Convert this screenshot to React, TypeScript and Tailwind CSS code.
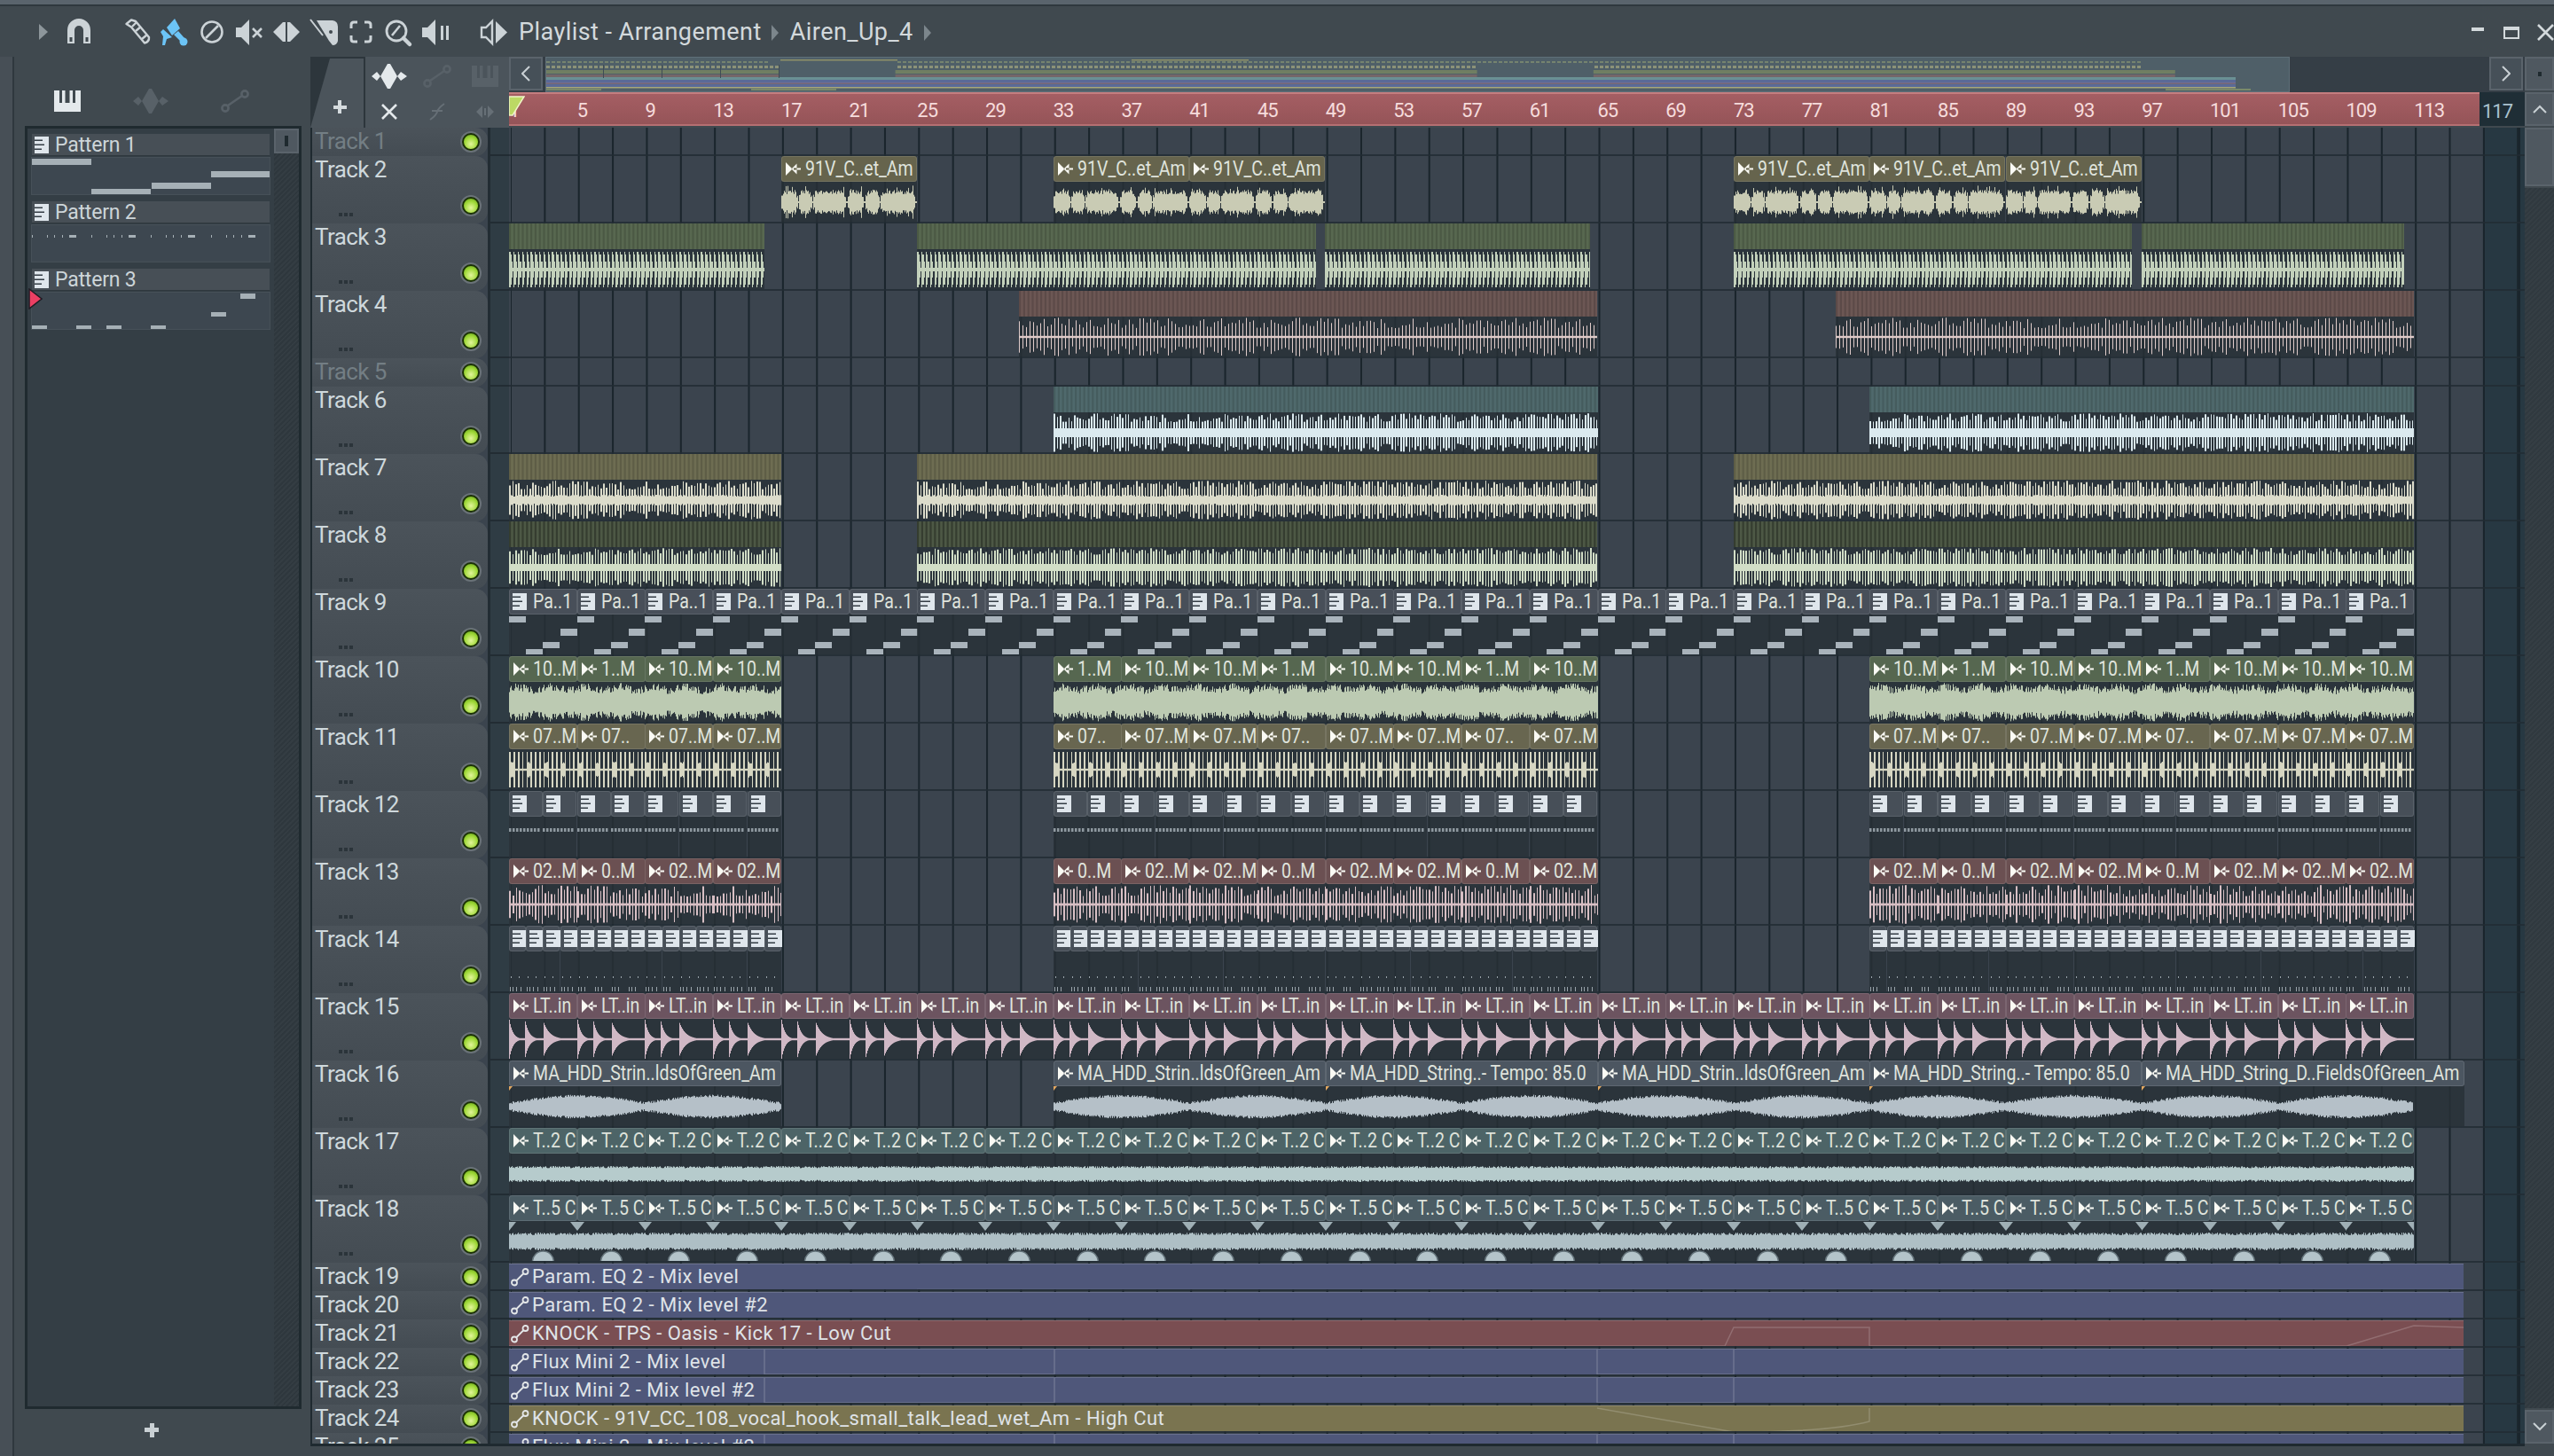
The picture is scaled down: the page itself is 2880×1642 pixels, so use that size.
import React from "react";

const BAR = 19.18;
const barX = (bar: number) => (bar - 1) * BAR;

const hash = (n: number) => {
  const s = Math.sin(n * 127.1 + 3.7) * 43758.5453;
  return s - Math.floor(s);
};

// ── waveform shapes: amplitude for a column t (px from clip start) ──
type WaveFn = (t: number, seed: number) => number;

const vocalSegs = [[0, 18], [20, 34], [36, 72], [75, 92], [95, 110], [112, 150]];

const waves: Record<string, WaveFn> = {
  vocal: (t, s) => {
    const seg = vocalSegs.find((g) => t >= g[0] && t <= g[1]);
    if (!seg) return 1;
    const edge = Math.min(t - seg[0], seg[1] - t);
    const body = 9 + hash(t + s) * 5 + (hash(t * 3 + s) > 0.9 ? 5 : 0);
    return edge < 2 ? body * 0.6 : body;
  },
  stab: (t) => {
    const p = (t % 4.8) / 4.8;
    return p < 0.22 ? 20 : p < 0.5 ? 17 : p < 0.75 ? 9 : 2;
  },
  pink: (t, s) => {
    const p = (t % 4) / 4;
    return p < 0.25 ? 10 + hash(Math.floor(t / 4) + s) * 12 : 1.2;
  },
  dense: (t, s) => {
    const p = (t % 3.2) / 3.2;
    return p < 0.5 ? 12 + hash(Math.floor(t / 3.2) + s) * 10 : 5;
  },
  yellow: (t, s) => {
    const p = (t % 3.2) / 3.2;
    return p < 0.5 ? 12 + hash(Math.floor(t / 3.2) + s) * 10 : 4 + hash(t) * 2;
  },
  greenSpike: (t, s) => {
    const p = (t % 3.2) / 3.2;
    return p < 0.5 ? 14 + hash(Math.floor(t / 3.2) + s) * 8 : 4;
  },
  noise: (t, s) => 11 + hash(t + s) * 9 + 2 * Math.sin(t / 6),
  spiky: (t, s) => {
    const p = (t % 4.8) / 4.8;
    if (p < 0.3) return 20;
    const lump = (t % 19.18) / 19.18;
    return lump < 0.25 ? 7 + hash(t + s) * 2 : 1.2;
  },
  redSpike: (t, s) => {
    const p = (t % 3.6) / 3.6;
    return p < 0.4 ? 9 + hash(Math.floor(t / 3.6) + s) * 13 : 1.4;
  },
  kick: (t) => {
    const hit = (at: number, len: number, amp: number) =>
      t >= at ? amp * Math.exp(-(t - at) / len) : 0;
    return Math.max(1.2, hit(0, 4, 22), hit(17.4, 4.5, 23), hit(38.4, 7, 20));
  },
  strings: (t, s) => 2.5 + 8 * Math.abs(Math.sin((Math.PI * t) / 153)) + hash(t + s) * 3,
  pad: (t, s) => 6.5 + hash(t + s) * 2.5,
  pad2: (t, s) => 7 + hash(t + s) * 3,
};

const wavePath = (kind: string, w: number, seed: number, cy: number) => {
  let d = "";
  const fn = waves[kind];
  for (let x = 0; x < w; x++) {
    const a = fn(x, seed);
    d += `M${x + 0.5} ${(cy - a).toFixed(1)}V${(cy + a).toFixed(1)}`;
  }
  return d;
};

// ── little icons used inside clips ──
const AudioGlyph = ({ color = "#fafaf4" }: { color?: string }) => (
  <svg width="18" height="15" viewBox="0 0 18 15" className="shrink-0">
    <path d="M1 0L8.5 7.5L1 15ZM13.5 1.5L7.5 7.5L13.5 13.5ZM10 6.5H18V8.5H10Z" fill={color} />
  </svg>
);

const PatternGlyph = () => (
  <svg width="16" height="19" viewBox="0 0 16 19" className="shrink-0">
    <rect width="16" height="19" fill="#dfe6ec" />
    <path d="M0 3.5H9V5H0ZM0 8.5H11V10H0ZM0 13.5H8V15H0Z" fill="#343d45" />
  </svg>
);

const AutoGlyph = () => (
  <svg width="21" height="21" viewBox="0 0 21 21" className="shrink-0">
    <circle cx="4" cy="16.5" r="3" fill="none" stroke="#e4e7e9" strokeWidth="1.8" />
    <circle cx="16.5" cy="4" r="3" fill="none" stroke="#e4e7e9" strokeWidth="1.8" />
    <path d="M6.5 14L14 6.5" stroke="#e4e7e9" strokeWidth="1.8" />
  </svg>
);

// ── track data ──
type Clip = { start: number; end: number; label?: string };
type Track = {
  n: number;
  h: number;
  dim?: boolean;
  type: "empty" | "band" | "title" | "auto";
  color?: string;
  waveColor?: string;
  wave?: string;
  stripe?: number;
  glyph?: "audio" | "pattern";
  extra?: "notes" | "dash" | "ticks" | "marks" | "orange";
  clips?: Clip[];
  line?: string;
  label?: string;
};

const run = (start: number, end: number, step: number, labels: string[] | string): Clip[] => {
  const out: Clip[] = [];
  let i = 0;
  for (let b = start; b < end; b += step) {
    out.push({ start: b, end: b + step, label: typeof labels === "string" ? labels : labels[i] });
    i++;
  }
  return out;
};

const tracks: Track[] = [
  { n: 1, h: 32, dim: true, type: "empty" },
  {
    n: 2, h: 76, type: "title", color: "#66644d", waveColor: "#c9cbb4", wave: "vocal", glyph: "audio",
    clips: [...run(17, 25, 8, "91V_C..et_Am"), ...run(33, 49, 8, "91V_C..et_Am"), ...run(73, 97, 8, "91V_C..et_Am")],
  },
  {
    n: 3, h: 76, type: "band", color: "#586850", waveColor: "#c3d1bb", wave: "stab", stripe: 0.14,
    clips: [{ start: 1, end: 16 }, { start: 25, end: 48.45 }, { start: 48.95, end: 64.55 }, { start: 73, end: 96.4 }, { start: 97, end: 112.45 }],
  },
  {
    n: 4, h: 76, type: "band", color: "#6c5754", waveColor: "#dfcbc9", wave: "pink", stripe: 0.14,
    clips: [{ start: 31, end: 65 }, { start: 79, end: 113 }],
  },
  { n: 5, h: 32, dim: true, type: "empty" },
  {
    n: 6, h: 76, type: "band", color: "#4f696c", waveColor: "#dbeaef", wave: "dense", stripe: 0.12,
    clips: [{ start: 33, end: 65 }, { start: 81, end: 113 }],
  },
  {
    n: 7, h: 76, type: "band", color: "#6e6d52", waveColor: "#dcdccb", wave: "yellow", stripe: 0.14,
    clips: [{ start: 1, end: 17 }, { start: 25, end: 65 }, { start: 73, end: 113 }],
  },
  {
    n: 8, h: 76, type: "band", color: "#4d5845", waveColor: "#d2dec7", wave: "greenSpike", stripe: 0.3,
    clips: [{ start: 1, end: 17 }, { start: 25, end: 65 }, { start: 73, end: 113 }],
  },
  {
    n: 9, h: 76, type: "title", color: "#484f59", glyph: "pattern", extra: "notes",
    clips: run(1, 113, 4, "Pa..1"),
  },
  {
    n: 10, h: 76, type: "title", color: "#566750", waveColor: "#bccab2", wave: "noise", glyph: "audio",
    clips: [
      ...run(1, 17, 4, ["10..M", "1..M", "10..M", "10..M"]),
      ...run(33, 65, 4, ["1..M", "10..M", "10..M", "1..M", "10..M", "10..M", "1..M", "10..M"]),
      ...run(81, 113, 4, ["10..M", "1..M", "10..M", "10..M", "1..M", "10..M", "10..M", "10..M"]),
    ],
  },
  {
    n: 11, h: 76, type: "title", color: "#686650", waveColor: "#d6d6c2", wave: "spiky", glyph: "audio",
    clips: [
      ...run(1, 17, 4, ["07..M", "07..", "07..M", "07..M"]),
      ...run(33, 65, 4, ["07..", "07..M", "07..M", "07..", "07..M", "07..M", "07..", "07..M"]),
      ...run(81, 113, 4, ["07..M", "07..", "07..M", "07..M", "07..", "07..M", "07..M", "07..M"]),
    ],
  },
  {
    n: 12, h: 76, type: "title", color: "#474f58", glyph: "pattern", extra: "dash",
    clips: [...run(1, 17, 2, ""), ...run(33, 65, 2, ""), ...run(81, 113, 2, "")],
  },
  {
    n: 13, h: 76, type: "title", color: "#6b5052", waveColor: "#d8bfc4", wave: "redSpike", glyph: "audio",
    clips: [
      ...run(1, 17, 4, ["02..M", "0..M", "02..M", "02..M"]),
      ...run(33, 65, 4, ["0..M", "02..M", "02..M", "0..M", "02..M", "02..M", "0..M", "02..M"]),
      ...run(81, 113, 4, ["02..M", "0..M", "02..M", "02..M", "0..M", "02..M", "02..M", "02..M"]),
    ],
  },
  {
    n: 14, h: 76, type: "title", color: "#474f58", glyph: "pattern", extra: "ticks",
    clips: [...run(1, 17, 1, ""), ...run(33, 65, 1, ""), ...run(81, 113, 1, "")],
  },
  {
    n: 15, h: 76, type: "title", color: "#6c5460", waveColor: "#d0b8c5", wave: "kick", glyph: "audio",
    clips: run(1, 113, 4, "LT..in"),
  },
  {
    n: 16, h: 76, type: "title", color: "#4c5661", waveColor: "#b5c0c8", wave: "strings", glyph: "audio", extra: "orange",
    clips: [
      { start: 1, end: 17, label: "MA_HDD_Strin..ldsOfGreen_Am" },
      { start: 33, end: 49, label: "MA_HDD_Strin..ldsOfGreen_Am" },
      { start: 49, end: 65, label: "MA_HDD_String..- Tempo: 85.0" },
      { start: 65, end: 81, label: "MA_HDD_Strin..ldsOfGreen_Am" },
      { start: 81, end: 97, label: "MA_HDD_String..- Tempo: 85.0" },
      { start: 97, end: 116, label: "MA_HDD_String_D..FieldsOfGreen_Am" },
    ],
  },
  {
    n: 17, h: 76, type: "title", color: "#4d6467", waveColor: "#b6cbcc", wave: "pad", glyph: "audio",
    clips: run(1, 113, 4, "T..2 C"),
  },
  {
    n: 18, h: 76, type: "title", color: "#4b5c64", waveColor: "#aebfc5", wave: "pad2", glyph: "audio", extra: "marks",
    clips: run(1, 113, 4, "T..5 C"),
  },
  { n: 19, h: 32, type: "auto", color: "#4f577a", label: "Param. EQ 2 - Mix level", line: "M460 28.5H2204" },
  { n: 20, h: 32, type: "auto", color: "#4f577a", label: "Param. EQ 2 - Mix level #2" },
  { n: 21, h: 32, type: "auto", color: "#7a4e52", label: "KNOCK - TPS - Oasis - Kick 17 - Low Cut", line: "M0 28H1371L1381 7H1534V28H2072L2148 5L2204 7" },
  { n: 22, h: 32, type: "auto", color: "#4f577a", label: "Flux Mini 2 - Mix level", line: "M288 0V28H615V0M1227 0V28H1381V0" },
  { n: 23, h: 32, type: "auto", color: "#4f577a", label: "Flux Mini 2 - Mix level #2", line: "M288 0V28H615V0M1227 0V28H1381V0" },
  { n: 24, h: 32, type: "auto", color: "#7a7450", label: "KNOCK - 91V_CC_108_vocal_hook_small_talk_lead_wet_Am - High Cut", line: "M1227 2L1381 29Q1490 29 1534 17V2" },
  { n: 25, h: 32, type: "auto", color: "#4f577a", label: "Flux Mini 2 - Mix level #2", line: "M288 0V28H615V0M1227 0V28H1381V0" },
];

// ── clip pieces ──
const BandClip = ({ clip, track }: { clip: Clip; track: Track }) => {
  const w = Math.round((clip.end - clip.start) * BAR);
  const stripes: number[] = [];
  for (let x = 0; x < w; x += 4.8) stripes.push(x);
  return (
    <svg
      className="absolute top-0 bg-[#283137]/80"
      width={w}
      height={74}
      style={{ left: barX(clip.start) }}
    >
      <rect width={w} height="29" fill={track.color} />
      {stripes.map((x) => (
        <rect key={x} x={x} width="2.2" height="29" fill="#000" opacity={track.stripe} />
      ))}
      <path d={wavePath(track.wave!, w, track.n * 31 + clip.start, 52)} stroke={track.waveColor} strokeWidth="1" />
    </svg>
  );
};

const ClipBody = ({ clip, track, w }: { clip: Clip; track: Track; w: number }) => {
  const seed = track.n * 17 + clip.start * 3;
  if (track.extra === "notes") {
    return (
      <svg width={w} height={45} fill="#a9b3bb">
        <rect x="0" y="2" width="19" height="7" />
        <rect x="19" y="39" width="19" height="6" />
        <rect x="38" y="31" width="19" height="7" />
        <rect x="58" y="16" width="19" height="8" />
      </svg>
    );
  }
  if (track.extra === "dash") {
    const dashes = Array.from({ length: Math.floor(w / 4) }, (_, i) => i * 4);
    return (
      <svg width={w} height={45} fill="#8e989f">
        {dashes.map((x) => (
          <rect key={x} x={x} y="13" width="2.5" height="4" />
        ))}
      </svg>
    );
  }
  if (track.extra === "ticks") {
    return (
      <svg width={w} height={45} fill="#9aa4ab">
        <rect x="2" y="28" width="1" height="2" />
        <rect x="11" y="28" width="1" height="2" />
        <rect x="1" y="40" width="1" height="5" />
        <rect x="4" y="40" width="1" height="5" />
        <rect x="8" y="40" width="1" height="5" />
        {hash(clip.start) > 0.4 && <rect x="13" y="40" width="1" height="5" />}
      </svg>
    );
  }
  return (
    <svg width={w} height={45} className="overflow-hidden">
      <path d={wavePath(track.wave!, Math.min(w, track.n === 16 && clip.end > 113 ? 306 : w), seed, 23)} stroke={track.waveColor} strokeWidth="1" />
      {track.extra === "marks" && (
        <>
          <path d="M0 11L-8 1H8Z" fill="#9fafb5" />
          <path d={`M${w} 11L${w - 8} 1H${w + 8}Z`} fill="#9fafb5" />
          <circle cx="38.4" cy="46" r="12" fill="#b4c4ca" stroke="#66757c" strokeWidth="1.5" />
        </>
      )}
      {track.extra === "orange" && <path d="M0 0H4L0 5Z" fill="#e4a860" />}
    </svg>
  );
};

const TitleClip = ({ clip, track }: { clip: Clip; track: Track }) => {
  const w = Math.round((clip.end - clip.start) * BAR);
  return (
    <div
      className="absolute top-0 flex h-[74px] flex-col bg-[#283137]/80"
      style={{ left: barX(clip.start), width: w }}
    >
      <div
        className="flex h-[29px] shrink-0 items-center gap-[5px] whitespace-nowrap rounded-[3px] border border-white/10 pl-[3px] text-[23px] leading-none text-[#dfe3dc]"
        style={{ backgroundColor: track.color }}
      >
        {track.glyph === "audio" ? <AudioGlyph /> : <PatternGlyph />}
        {clip.label && (
          <span className={`inline-block origin-left scale-x-[0.85] ${track.glyph === "pattern" ? "ml-[2px]" : ""}`}>
            {clip.label}
          </span>
        )}
      </div>
      <ClipBody clip={clip} track={track} w={w} />
    </div>
  );
};

const AutoClip = ({ track }: { track: Track }) => (
  <div
    className="absolute inset-x-0 top-[1px] mr-[69px] flex h-[29px] items-center gap-[3px] overflow-hidden border-t border-white/15 pl-[2px] text-[22px] leading-none tracking-[0.45px] text-[#dfe3e8]"
    style={{ backgroundColor: track.color }}
  >
    {track.line && (
      <svg className="absolute left-0 top-0" width="2204" height="30" fill="none">
        <path d={track.line} stroke="#fff" strokeOpacity="0.18" strokeWidth="1.5" />
      </svg>
    )}
    <AutoGlyph />
    <span className="relative">{track.label}</span>
  </div>
);

const TrackHead = ({ track }: { track: Track }) => {
  const tall = track.h > 40;
  return (
    <div
      className={`flex w-[198px] shrink-0 justify-between rounded-r-[14px] bg-[linear-gradient(#4b535a,#444c53)] pl-[3px] pr-[7px] ${
        tall ? "" : "items-center"
      }`}
    >
      <div className="flex flex-col justify-between">
        <span
          className={`text-[26px] leading-[30px] tracking-[-0.6px] ${tall ? "" : "mt-[-2px]"} ${
            track.dim ? "text-[#737e84]" : "text-[#ced8dc]"
          }`}
        >
          Track {track.n}
        </span>
        {tall && (
          <div className="mb-[8px] ml-[27px] flex gap-[2px]">
            <i className="h-[4px] w-[4px] bg-[#2b343a]" />
            <i className="h-[4px] w-[4px] bg-[#2b343a]" />
            <i className="h-[4px] w-[4px] bg-[#2b343a]" />
          </div>
        )}
      </div>
      <span
        className={`flex h-[24px] w-[24px] shrink-0 items-center justify-center rounded-full bg-[#6a7278] ${
          tall ? "mt-[44px]" : ""
        }`}
      >
        <i className="h-[20px] w-[20px] rounded-full border-2 border-[#1b3106] bg-[radial-gradient(circle_at_50%_65%,#e2f59a,#9fd838_55%,#5f9c14)]" />
      </span>
    </div>
  );
};

const TrackRow = ({ track }: { track: Track }) => (
  <div className="flex shrink-0" style={{ height: track.h }}>
    <TrackHead track={track} />
    <div className="w-[24px] shrink-0 border-b-2 border-l-[3px] border-[#222c33] bg-[#2f3c44]" />
    <div className="relative flex-1 border-b-2 border-[#222c33]/80">
      {track.type === "band" && track.clips!.map((c) => <BandClip key={c.start} clip={c} track={track} />)}
      {track.type === "title" && track.clips!.map((c) => <TitleClip key={c.start} clip={c} track={track} />)}
      {track.type === "auto" && <AutoClip track={track} />}
    </div>
  </div>
);

// grid behind the lanes
const gridLines = Array.from({ length: 60 }, (_, i) => i * 2 * BAR);

const Grid = () => (
  <svg className="absolute left-[224px] top-0" width="2273" height="1484">
    <rect x="2225" width="48" height="1484" fill="#273842" />
    {gridLines.map((x) => (
      <rect key={x} x={x - 1} width="2" height="1484" fill="#1a252c" />
    ))}
    <rect x="2264" width="2" height="1484" fill="#1a252c" />
  </svg>
);

// ── overview strip ──
const ovX = (bar: number) => (bar - 1) * 16.4;

const Overview = () => {
  const hatch = Array.from({ length: 300 }, (_, i) => i * 6);
  const spans = [
    [1, 17],
    [25, 65],
    [73, 113],
  ];
  return (
    <svg width="1965" height="38" className="shrink-0 bg-[#4f5f68]">
      <rect x="264" y="2" width="132" height="1.5" fill="#8f9168" />
      <rect x="660" y="2" width="132" height="1.5" fill="#8f9168" />
      {hatch.map((x) => {
        const off = x > 248 && x < 396;
        const past = x > 1856;
        return off || past ? null : <rect key={x} x={x} y="4" width="4" height="2" fill="#75836f" />;
      })}
      {hatch.map((x) => {
        const on = spans.some((s) => x >= ovX(s[0]) && x < ovX(s[1])) && x < 1856;
        return on ? <rect key={x} x={x} y="9" width="4" height="3" fill="#8b9278" /> : null;
      })}
      {spans.map((s) => (
        <g key={s[0]}>
          <rect x={ovX(s[0])} y="14" width={ovX(s[1]) - ovX(s[0])} height="4" fill="#707e62" />
          <rect x={ovX(s[0])} y="19" width={ovX(s[1]) - ovX(s[0])} height="3" fill="#756668" />
        </g>
      ))}
      <rect y="22" width="1905" height="3" fill="#6a9093" />
      <rect y="25" width="1905" height="4" fill="#5a6a98" />
      <rect y="28.5" width="1905" height="1" fill="#96707e" />
      <rect y="30" width="1905" height="3" fill="#5a6a98" />
      <rect y="33" width="1905" height="1.5" fill="#a8a87a" />
      <rect x="0" y="35" width="62" height="2" fill="#7a8a6a" />
      <rect x="231" y="35" width="96" height="2" fill="#7a8a6a" />
      <rect x="1826" y="35" width="96" height="2" fill="#7a8a6a" />
      {[64, 130, 196, 262].map((x) => (
        <rect key={x} x={x} y="8" width="1" height="15" fill="#3f4c55" />
      ))}
    </svg>
  );
};

// ── toolbar icons ──
const ic = "#ccd3d7";

const toolIcons: { w: number; ml: number; node: React.ReactNode }[] = [
  { w: 10, ml: 44, node: <path d="M0 6L10 15L0 24Z" fill="#8d969b" /> },
  {
    w: 28, ml: 21,
    node: (
      <>
        <path d="M1 28V13A13 13 0 0 1 27 13V28H19V13A5 5 0 0 0 9 13V28Z" fill={ic} />
        <path d="M3.5 21H6.5V26H3.5ZM21.5 21H24.5V26H21.5Z" fill="#40494f" />
      </>
    ),
  },
  {
    w: 29, ml: 38,
    node: (
      <g fill="none" stroke={ic} strokeWidth="2.4" strokeLinejoin="round">
        <path d="M1.5 6L7 1.5L12 3L27 21Q27.5 26 22 27.5L7 9.5Z" />
        <path d="M8 9L13 4M12 14L18 9M19 23L25 18" />
      </g>
    ),
  },
  {
    w: 31, ml: 11,
    node: (
      <g fill="#6cc4f6">
        <path d="M7 10L16 0L22 11L13 19Z" />
        <path d="M3 12L13 21L7 23L5 30L2 30L3 20L0 15Z" />
        <path d="M15 18L20 14L27 22L23 26Z" />
        <circle cx="26" cy="26" r="4.5" />
      </g>
    ),
  },
  {
    w: 26, ml: 14,
    node: (
      <g fill="none" stroke={ic} strokeWidth="2.6">
        <circle cx="13" cy="15" r="11.5" />
        <path d="M6 22L20 8" />
      </g>
    ),
  },
  {
    w: 31, ml: 14,
    node: (
      <>
        <path d="M0 10H6L15 1V30L6 21H0Z" fill={ic} />
        <path d="M19 11L29 21M29 11L19 21" stroke={ic} strokeWidth="2.6" fill="none" />
      </>
    ),
  },
  {
    w: 30, ml: 11,
    node: <path d="M0 15L11 4H14V26H11ZM30 15L19 4H16V26H19Z" fill={ic} />,
  },
  {
    w: 31, ml: 12,
    node: (
      <>
        <path d="M0 1L14 19" stroke={ic} strokeWidth="2" fill="none" />
        <path d="M7 2H25Q31 3 31 9V25Q30 30 25 30L21 25Z" fill={ic} />
        <circle cx="23" cy="15" r="2" fill="#40494f" />
      </>
    ),
  },
  {
    w: 26, ml: 13,
    node: (
      <path d="M9 4H5Q2 4 2 7V11M17 4H21Q24 4 24 7V11M2 19V23Q2 26 5 26H9M24 19V23Q24 26 21 26H17" fill="none" stroke={ic} strokeWidth="3" />
    ),
  },
  {
    w: 31, ml: 14,
    node: (
      <g fill="none" stroke={ic}>
        <circle cx="13" cy="14" r="11" strokeWidth="2.8" />
        <path d="M8 19L17 8" strokeWidth="2.6" />
        <path d="M21 22L28 29" strokeWidth="4.5" strokeLinecap="round" />
      </g>
    ),
  },
  {
    w: 30, ml: 11,
    node: (
      <>
        <path d="M0 10H6L15 1V30L6 21H0Z" fill={ic} />
        <path d="M21 8H24V24H21ZM27 8H30V24H27Z" fill={ic} />
      </>
    ),
  },
  {
    w: 31, ml: 35,
    node: (
      <>
        <path d="M14 3V28L7 21H2V10H7Z" fill="none" stroke={ic} strokeWidth="2.4" />
        <path d="M18 3L31 15.5L18 28Z" fill={ic} />
      </>
    ),
  },
];

const TitleArrow = () => (
  <svg width="8" height="18" viewBox="0 0 8 18" className="shrink-0">
    <path d="M0 0L8 9L0 18Z" fill="#7c868c" />
  </svg>
);

const TitleBar = () => (
  <div className="flex h-[57px] shrink-0 items-center pt-[2px]">
    {toolIcons.map((t, i) => (
      <svg key={i} width={t.w} height="31" viewBox={`0 0 ${t.w} 31`} className="shrink-0 overflow-visible" style={{ marginLeft: t.ml }}>
        {t.node}
      </svg>
    ))}
    <span className="ml-[13px] text-[27px] leading-none tracking-[0.45px] text-[#d3d9dc]">Playlist - Arrangement</span>
    <span className="ml-[11px]"><TitleArrow /></span>
    <span className="ml-[13px] text-[27px] leading-none tracking-[0.45px] text-[#d3d9dc]">Airen_Up_4</span>
    <span className="ml-[12px]"><TitleArrow /></span>
    <div className="ml-auto flex items-center">
      <i className="mb-[8px] h-[4px] w-[14px] bg-[#d3d9dc]" />
      <i className="ml-[22px] h-[14px] w-[18px] border-2 border-t-4 border-[#d3d9dc]" />
      <svg width="19" height="19" viewBox="0 0 19 19" className="ml-[20px] shrink-0">
        <path d="M1 1L18 18M18 1L1 18" stroke="#d3d9dc" strokeWidth="2.6" />
      </svg>
    </div>
  </div>
);

// ── picker ──
type Note = [number, number, number, number];

const patterns: { name: string; notes: Note[] }[] = [
  { name: "Pattern 1", notes: [[0, 1, 67, 7], [67, 35, 67, 7], [135, 28, 67, 7], [202, 15, 67, 7]] },
  {
    name: "Pattern 2",
    notes: [0, 67, 134, 202].flatMap((o): Note[] => [
      [o + 0, 11, 1, 3], [o + 17, 11, 1, 3], [o + 25, 11, 1, 3], [o + 34, 11, 1, 3], [o + 42, 11, 8, 3],
    ]),
  },
  {
    name: "Pattern 3",
    notes: [[0, 37, 17, 6], [50, 37, 17, 6], [84, 37, 17, 6], [134, 37, 17, 6], [202, 22, 17, 5], [235, 1, 17, 6]],
  },
];

const PickerIcon = ({ kind, faded }: { kind: string; faded?: boolean }) => {
  const c = faded ? "#586168" : "#e4e9ec";
  if (kind === "piano") {
    return (
      <svg width="30" height="24" viewBox="0 0 30 24" className="shrink-0">
        <path d="M0 0H6V14H9V0H12.5V14H17.5V0H21V14H24V0H30V24H0Z" fill={c} />
      </svg>
    );
  }
  if (kind === "wave") {
    return (
      <svg width="40" height="28" viewBox="0 0 40 28" className="shrink-0">
        <path d="M0 14L6 9L10 14L14 7L18 0H21L25 7L29 14L33 9L40 14L33 19L29 14L25 21L21 28H18L14 21L10 14L6 19Z" fill={c} />
      </svg>
    );
  }
  return (
    <svg width="32" height="26" viewBox="0 0 32 26" className="shrink-0" fill="none" stroke={c} strokeWidth="2.6">
      <circle cx="5" cy="21" r="3.6" />
      <circle cx="27" cy="5" r="3.6" />
      <path d="M8 18L24 7" />
    </svg>
  );
};

const Picker = () => (
  <div className="flex w-[334px] shrink-0 flex-col">
    <div className="flex h-[78px] shrink-0 items-center pl-[45px] pt-[22px]">
      <div className="flex items-center gap-[59px]">
        <PickerIcon kind="piano" />
        <PickerIcon kind="wave" faded />
        <PickerIcon kind="auto" faded />
      </div>
    </div>
    <div className="relative ml-[12px] flex h-[1447px] w-[312px] shrink-0 border-[3px] border-[#1f2a2f] bg-[#343e45]">
      <div className="flex flex-1 flex-col pl-[4px] pt-[6px]">
        {patterns.map((p) => (
          <div key={p.name} className="flex h-[76px] shrink-0 flex-col">
            <div className="ml-[1px] flex h-[25px] w-[268px] items-center gap-[7px] border-b border-[#2f383e] bg-[#474f56] pl-[3px] text-[23px] leading-none tracking-[-0.2px] text-[#cdd5d9]">
              <PatternGlyph />
              {p.name}
            </div>
            <svg width="270" height="43" className="mt-[1px] border border-[#465058] bg-[#3d4750]">
              {p.notes.map((n, i) => (
                <rect key={i} x={n[0]} y={n[1]} width={n[2]} height={n[3]} fill="#a6b0b6" />
              ))}
            </svg>
          </div>
        ))}
      </div>
      <div className="flex w-[28px] shrink-0 flex-col bg-[repeating-linear-gradient(135deg,#2e373d_0_2px,#343d43_2px_4px)]">
        <div className="flex h-[28px] shrink-0 items-center justify-center border-2 border-[#5a636b] bg-[#4f5860]">
          <i className="h-[12px] w-[4px] bg-[#1f2a2f]" />
        </div>
      </div>
      <svg className="absolute left-[1px] top-[180px]" width="16" height="24" viewBox="0 0 16 24">
        <path d="M1 1L15 12L1 23Z" fill="#ec3f63" stroke="#1f1c24" strokeWidth="1.5" />
      </svg>
    </div>
    <div className="flex flex-1 items-center justify-center pb-[6px] pr-[24px]">
      <span className="relative h-[16px] w-[16px]">
        <i className="absolute left-[5.5px] top-0 h-[16px] w-[5px] bg-[#c9d0d4]" />
        <i className="absolute left-0 top-[5.5px] h-[5px] w-[16px] bg-[#c9d0d4]" />
      </span>
    </div>
  </div>
);

// ── playlist header ──
const NavButton = ({ dir }: { dir: "left" | "right" }) => (
  <div className="flex h-[38px] w-[38px] shrink-0 items-center justify-center border-2 border-[#5a636b] bg-[#465058]">
    <svg width="10" height="18" viewBox="0 0 10 18" fill="none" stroke="#c9d0d4" strokeWidth="2">
      <path d={dir === "left" ? "M9 1L1 9L9 17" : "M1 1L9 9L1 17"} />
    </svg>
  </div>
);

const rulerLabels = Array.from({ length: 29 }, (_, i) => 1 + i * 4);

const Ruler = () => (
  <div className="flex h-[38px] shrink-0">
    <div className="relative flex w-[2222px] shrink-0 items-center overflow-hidden border-y-2 border-t-[#c47d7f] border-b-[#b56f72] bg-[linear-gradient(#a55e63,#955458)] pt-[3px] text-[22px] leading-none tracking-[-1px] text-[#f6dcdc]">
      {rulerLabels.map((n) => (
        <span key={n} className="w-[76.72px] shrink-0">
          {n}
        </span>
      ))}
      <svg className="absolute left-0 top-[2px]" width="18" height="24" viewBox="0 0 18 24">
        <path d="M0 1H17L4 22H0Z" fill="#bcd964" stroke="#f0f5c8" strokeWidth="1.5" />
      </svg>
    </div>
    <div className="flex flex-1 items-center bg-[#1f2e36] pl-[3px] pt-[6px] text-[22px] leading-none tracking-[-1px] text-[#a9c2ce]">
      117
    </div>
  </div>
);

const ToolTabs = () => (
  <div className="flex h-[80px] w-[224px] shrink-0 gap-[2px] bg-[#2d363c]">
    <div className="flex w-[60px] shrink-0 items-end justify-center bg-[#4b545b] pb-[16px] pl-[6px] [clip-path:polygon(22px_2px,100%_2px,100%_100%,0_100%)]">
      <span className="relative h-[15px] w-[15px]">
        <i className="absolute left-[5.5px] top-0 h-[15px] w-[4px] bg-[#d5dbde]" />
        <i className="absolute left-0 top-[5.5px] h-[4px] w-[15px] bg-[#d5dbde]" />
      </span>
    </div>
    <div className="grid flex-1 grid-cols-3 place-items-center bg-[#4b545b]">
      <PickerIcon kind="wave" />
      <PickerIcon kind="auto" faded />
      <PickerIcon kind="piano" faded />
      <svg width="20" height="18" viewBox="0 0 20 18" fill="none" stroke="#e4e9ec" strokeWidth="2.6">
        <path d="M2 1L18 17M18 1L2 17" />
      </svg>
      <svg width="20" height="20" viewBox="0 0 20 20" fill="none" stroke="#666f76" strokeWidth="2">
        <path d="M2 19Q9 14 10 10T18 1M4 9H16" />
      </svg>
      <svg width="20" height="16" viewBox="0 0 20 16" fill="#666f76">
        <path d="M0 8L7 1V15ZM20 8L13 1V15ZM9 4H11V12H9Z" />
      </svg>
    </div>
  </div>
);

const Playlist = () => (
  <div className="flex min-w-0 flex-1">
    <div className="flex w-[2497px] shrink-0 flex-col">
      <div className="flex h-[80px] shrink-0">
        <ToolTabs />
        <div className="flex flex-1 flex-col">
          <div className="flex h-[40px] shrink-0 items-start bg-[#353e46]">
            <NavButton dir="left" />
            <div className="ml-[3px] border border-[#5f6f78]">
              <Overview />
            </div>
            <div className="ml-auto pr-[2px]">
              <NavButton dir="right" />
            </div>
          </div>
          <Ruler />
        </div>
      </div>
      <div className="relative h-[1484px] shrink-0 overflow-hidden border-l-2 border-[#1f2a30] bg-[#3b444e]">
        <Grid />
        <div className="relative flex flex-col">
          {tracks.map((t) => (
            <TrackRow key={t.n} track={t} />
          ))}
        </div>
      </div>
      <div className="h-[3px] shrink-0 bg-[#1f2a30]" />
    </div>
    <div className="flex h-[1564px] w-[33px] shrink-0 flex-col gap-[2px]">
      <div className="flex h-[38px] shrink-0 items-center justify-center border-2 border-[#5a636b] bg-[#4f5860]">
        <i className="h-[5px] w-[4px] bg-[#1f2a2f]" />
      </div>
      <div className="flex h-[38px] shrink-0 items-center justify-center border-2 border-[#5a636b] bg-[#4f5860]">
        <svg width="16" height="10" viewBox="0 0 16 10" fill="none" stroke="#c9d0d4" strokeWidth="2">
          <path d="M1 9L8 2L15 9" />
        </svg>
      </div>
      <div className="h-[66px] shrink-0 border-2 border-[#5a636b] bg-[#4f5860]" />
      <div className="flex-1 bg-[repeating-linear-gradient(135deg,#30393f_0_2px,#353e44_2px_4px)]" />
      <div className="flex h-[38px] shrink-0 items-center justify-center border-2 border-[#5a636b] bg-[#4f5860]">
        <svg width="16" height="10" viewBox="0 0 16 10" fill="none" stroke="#c9d0d4" strokeWidth="2">
          <path d="M1 1L8 8L15 1" />
        </svg>
      </div>
    </div>
  </div>
);

const App = () => (
  <div className="flex h-[1642px] w-[2880px] flex-col overflow-hidden bg-[#40494f] font-[family-name:Roboto,sans-serif]">
    <div className="h-[7px] shrink-0 border-b-2 border-[#2f383e] bg-[#5a646d]" />
    <TitleBar />
    <div className="flex min-h-0 flex-1">
      <div className="w-[16px] shrink-0 border-r-2 border-[#2f383e] bg-[#474f56]" />
      <Picker />
      <Playlist />
    </div>
  </div>
);

export default App;
